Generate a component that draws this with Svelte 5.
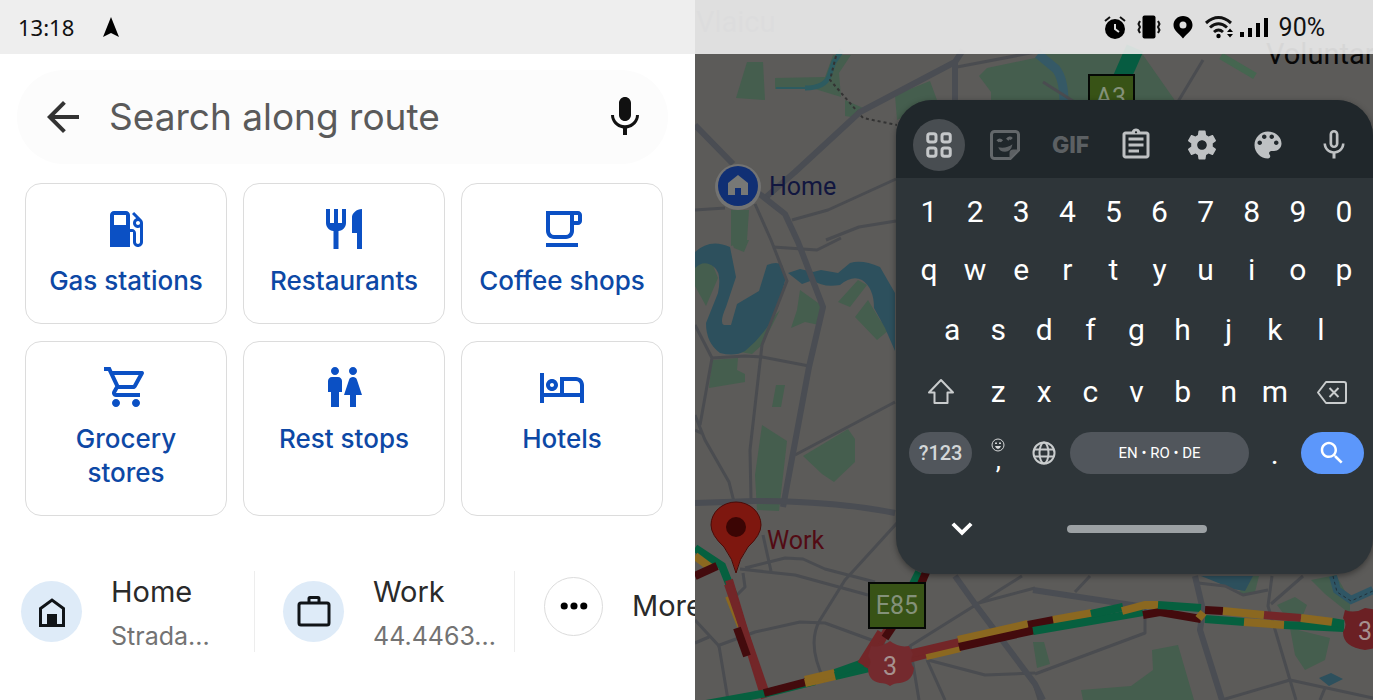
<script lang="ts">
	interface Category {
		name: string;
		icon: string;
	}

	interface Stroke {
		d: string;
		color: string;
	}

	const categories: Category[] = [
		{
			name: 'Gas stations',
			icon: 'M19.77 7.23l.01-.01-3.72-3.72L15 4.56l2.11 2.11c-.94.36-1.61 1.26-1.61 2.33 0 1.38 1.12 2.5 2.5 2.5.36 0 .69-.08 1-.21v7.21c0 .55-.45 1-1 1s-1-.45-1-1V14c0-1.1-.9-2-2-2h-1V5c0-1.1-.9-2-2-2H6c-1.1 0-2 .9-2 2v16h10v-7.5h1.5v5c0 1.38 1.12 2.5 2.5 2.5s2.5-1.12 2.5-2.5V9c0-.69-.28-1.32-.73-1.77zM12 10H6V5h6v5zm6 0c-.55 0-1-.45-1-1s.45-1 1-1 1 .45 1 1-.45 1-1 1z'
		},
		{
			name: 'Restaurants',
			icon: 'M11 9H9V2H7v7H5V2H3v7c0 2.12 1.66 3.84 3.75 3.97V22h2.5v-9.03C11.34 12.84 13 11.12 13 9V2h-2v7zm5-3v8h2.5v8H21V2c-2.76 0-5 2.24-5 4z'
		},
		{
			name: 'Coffee shops',
			icon: 'M16 5v8c0 1.1-.9 2-2 2H8c-1.1 0-2-.9-2-2V5h10m4-2H4v10c0 2.21 1.79 4 4 4h6c2.21 0 4-1.79 4-4v-3h2c1.11 0 2-.89 2-2V5c0-1.11-.89-2-2-2zm-2 5V5h2v3h-2zm2 11H4v2h16v-2z'
		},
		{
			name: 'Grocery stores',
			icon: 'M15.55 13c.75 0 1.41-.41 1.75-1.03l3.58-6.49c.37-.66-.11-1.48-.87-1.48H5.21l-.94-2H1v2h2l3.6 7.59-1.35 2.44C4.52 15.37 5.48 17 7 17h12v-2H7l1.1-2h7.45zM6.16 6h12.15l-2.76 5H8.53L6.16 6zM7 18c-1.1 0-1.99.9-1.99 2S5.9 22 7 22s2-.9 2-2-.9-2-2-2zm10 0c-1.1 0-1.99.9-1.99 2s.89 2 1.99 2 2-.9 2-2-.9-2-2-2z'
		},
		{
			name: 'Rest stops',
			icon: 'M5.5 22v-7.5H4V9c0-1.1.9-2 2-2h3c1.1 0 2 .9 2 2v5.5H9.5V22h-4zM18 22v-6h3l-2.54-7.63C18.18 7.55 17.42 7 16.56 7h-.12c-.86 0-1.63.55-1.9 1.37L12 16h3v6h3zM7.5 6c1.11 0 2-.89 2-2s-.89-2-2-2-2 .89-2 2 .89 2 2 2zm9 0c1.11 0 2-.89 2-2s-.89-2-2-2-2 .89-2 2 .89 2 2 2z'
		},
		{
			name: 'Hotels',
			icon: 'M7 14c1.66 0 3-1.34 3-3S8.66 8 7 8s-3 1.34-3 3 1.34 3 3 3zm0-4c.55 0 1 .45 1 1s-.45 1-1 1-1-.45-1-1 .45-1 1-1zm12-3h-8v8H3V5H1v15h2v-3h18v3h2v-9c0-2.21-1.79-4-4-4zm2 8h-8V9h6c1.1 0 2 .9 2 2v4z'
		}
	];

	const backIcon = 'M20 11H7.83l5.59-5.59L12 4l-8 8 8 8 1.41-1.41L7.83 13H20v-2z';
	const micIcon =
		'M12 14c1.66 0 3-1.34 3-3V5c0-1.66-1.34-3-3-3S9 3.34 9 5v6c0 1.66 1.34 3 3 3zM17.5 11c0 3-2.54 5.1-5.5 5.1S6.5 14 6.5 11H5c0 3.41 2.72 6.23 6 6.72V21h2v-3.28c3.28-.48 6-3.3 6-6.72h-1.5z';
	const micOutlineIcon =
		'M12 14c1.66 0 3-1.34 3-3V5c0-1.66-1.34-3-3-3S9 3.34 9 5v6c0 1.66 1.34 3 3 3zm-1.2-9.1c0-.66.54-1.2 1.2-1.2s1.2.54 1.2 1.2l-.01 6.2c0 .66-.53 1.2-1.19 1.2s-1.2-.54-1.2-1.2V4.9zM17.3 11c0 3-2.54 5.1-5.3 5.1S6.7 14 6.7 11H5c0 3.41 2.72 6.23 6 6.72V21h2v-3.28c3.28-.48 6-3.3 6-6.72h-1.7z';
	const clipboardIcon =
		'M7 15h7v2H7zm0-4h10v2H7zm0-4h10v2H7zm12-4h-4.18C14.4 1.84 13.3 1 12 1s-2.4.84-2.82 2H5c-1.1 0-2 .9-2 2v14c0 1.1.9 2 2 2h14c1.1 0 2-.9 2-2V5c0-1.1-.9-2-2-2zm-7-.25c.41 0 .75.34.75.75s-.34.75-.75.75-.75-.34-.75-.75.34-.75.75-.75zM19 19H5V5h14v14z';
	const gearIcon =
		'M19.14 12.94c.04-.3.06-.61.06-.94 0-.32-.02-.64-.07-.94l2.03-1.58c.18-.14.23-.41.12-.61l-1.92-3.32c-.12-.22-.37-.29-.59-.22l-2.39.96c-.5-.38-1.03-.7-1.62-.94l-.36-2.54c-.04-.24-.24-.41-.48-.41h-3.84c-.24 0-.43.17-.47.41l-.36 2.54c-.59.24-1.13.57-1.62.94l-2.39-.96c-.22-.08-.47 0-.59.22L2.74 8.87c-.12.21-.08.47.12.61l2.03 1.58c-.05.3-.09.63-.09.94s.02.64.07.94l-2.03 1.58c-.18.14-.23.41-.12.61l1.92 3.32c.12.22.37.29.59.22l2.39-.96c.5.38 1.03.7 1.62.94l.36 2.54c.05.24.24.41.48.41h3.84c.24 0 .44-.17.47-.41l.36-2.54c.59-.24 1.13-.56 1.62-.94l2.39.96c.22.08.47 0 .59-.22l1.92-3.32c.12-.22.07-.47-.12-.61l-2.01-1.58zM12 15.2c-1.76 0-3.2-1.44-3.2-3.2s1.44-3.2 3.2-3.2 3.2 1.44 3.2 3.2-1.44 3.2-3.2 3.2z';
	const paletteIcon =
		'M12 3c-4.97 0-9 4.03-9 9s4.03 9 9 9c.83 0 1.5-.67 1.5-1.5 0-.39-.15-.74-.39-1.01-.23-.26-.38-.61-.38-.99 0-.83.67-1.5 1.5-1.5H16c2.76 0 5-2.24 5-5 0-4.42-4.03-8-9-8zm-5.5 9c-.83 0-1.5-.67-1.5-1.5S5.67 9 6.5 9 8 9.67 8 10.5 7.33 12 6.5 12zm3-4C8.67 8 8 7.33 8 6.5S8.67 5 9.5 5s1.5.67 1.5 1.5S10.33 8 9.5 8zm5 0c-.83 0-1.5-.67-1.5-1.5S13.67 5 14.5 5s1.5.67 1.5 1.5S15.33 8 14.5 8zm3 4c-.83 0-1.5-.67-1.5-1.5S16.67 9 17.5 9s1.5.67 1.5 1.5-.67 1.5-1.5 1.5z';
	const searchIcon =
		'M15.5 14h-.79l-.28-.27C15.41 12.59 16 11.11 16 9.5 16 5.91 13.09 3 9.5 3S3 5.91 3 9.5 5.91 16 9.5 16c1.61 0 3.09-.59 4.23-1.57l.27.28v.79l5 4.99L20.49 19l-4.99-5zm-6 0C7.01 14 5 11.99 5 9.5S7.01 5 9.5 5 14 7.01 14 9.5 11.99 14 9.5 14z';
	const chevronIcon = 'M17.2 7.6L12 12.6 6.8 7.6 5 9.4l7 7 7-7z';

	const digits = [...'1234567890'];
	const topRow = [...'qwertyuiop'];
	const homeRow = [...'asdfghjkl'];
	const bottomRow = [...'zxcvbnm'];

	const green = '#06603f';
	const yellow = '#8b6820';
	const red = '#732628';
	const dark = '#430b0d';

	// map canvas, 678 x 700 units
	const parks = [
		'M52 62h16l2 38-29-2z',
		'M80 78l50-1 8-22h18l-12 18 2 24-26-8H80z',
		'M150 100l18 8-6 10-12-2zM200 95l35-14 7 19-40 20z',
		'M284 76l8-8 48-10 10-6h96l35 50H296v-10z',
		'M36 210h18l-2 30-16 6zM36 240h18l-5 12-10-4z',
		'M0 262l15-4 8 20-12 28-11-20z',
		'M45 352l40-42-18 35-10 9z',
		'M105 290l21 15-2 20-14-3-14 6 6-18z',
		'M143 302l20-22 9 5-17 22zM160 317l13-17 12 20 9 10-12 10z',
		'M17 360l26-2-1 12 8 4v8l-36 6z',
		'M81 385h9l-4 22h-9z',
		'M67 425l25 16-8 70-22-1-2-35z',
		'M108 456l45-27 7 10v23l-21 20-12-8z',
		'M386 690l50-4 22-16-1-20 26-5 16 55H388z',
		'M338 642h11l6 22-13 4z',
		'M582 605l18-8 12 8-4 10-20-2zM595 628l40 10-5 22-20 10-10-15z',
		'M616 580l25-5 14 25v14l-25-20z',
		'M544 592l14-16h6l-4 16-12 4z'
	];

	const waters = [
		'M0 252q15-14 35-5l6 30-10 30q-7 16-2 18l7 0 6-21 22-13 8-26q10-4 15 0l4 12-8 30q-10 25-33 44-10 6-25 2-14-10-14-30l12-30q4-20-4-26-10-8-19 1z',
		'M93 273l12-4 13 3 8-2 17 3 12-10q12-4 30 4l15 26v58l-10-23-11-20q0-20-12-28-10-5-22 5-17 3-27-5l-11 4z',
		'M506 576h52l-8 15-12-2-22-9z',
		'M624 678l12-5 12 6-14 7z'
	];

	const mainRoads = [
		'M0 125l38 39',
		'M268 50l-8 12-95 50-65 60-30 26',
		'M260 62v40',
		'M62 192l28 22 13 28 25 65-14 60-26 140',
		'M0 503l60-2q80 0 140 12',
		'M260 576l20 28 60 80 8 16',
		'M500 576l8 34-3 20 22 70',
		'M338 590l112 17'
	];

	const sideRoads = [
		'M0 210l30-2M60 204l16 36 16 41-25 64-12 105 1 50',
		'M262 67l84-16M97 220l36-10 68-31M131 240l33-13 37-6M78 247l44 3 24-12',
		'M0 325l17 33 33-2 17 1 47 9M17 358L5 425M0 415l10 25 24 42 5 20M0 430l8 4M100 455l100-53',
		'M202 523l-52 57-25 40q-14 24 5 62M50 568l40-10 18 1 22 10 50 13M45 569l55 6 73 20M68 535l8 36M48 573l2 14-11 11',
		'M22 646l38-14 45-10 25 1 60 22M0 620l24 26 9 54M0 643l14-6',
		'M327 576l-112 70 9 54M340 588l-60 16M233 660l57 15 50-2M232 660l18 40',
		'M395 576l-15 16M450 607v26l-110 41M503 583l27 3 18 9 25-5M577 576l-4 30 22 74M608 576l-32 28',
		'M527 700l68-20 83 18M595 680l6 20M630 688l-5 12M338 680l6 20M408 120l-60-38M508 60l-30 50'
	];

	const traffic: Stroke[] = [
		{ d: 'M0 548l27 18 12 30', color: green },
		{ d: 'M0 556l16 12', color: yellow },
		{ d: 'M0 576l22-10', color: dark },
		{ d: 'M34 596l12 30', color: yellow },
		{ d: 'M34 580l18 60 18 58', color: red },
		{ d: 'M33 584l38 110', color: red },
		{ d: 'M42 628l10 28', color: dark },
		{ d: 'M0 706l72-13 48-12', color: green },
		{ d: 'M69 693l42-11', color: dark },
		{ d: 'M110 683l34-8', color: yellow },
		{ d: 'M110 680l30-7', color: yellow },
		{ d: 'M140 676l34-8', color: green },
		{ d: 'M140 673l28-10', color: green },
		{ d: 'M172 668l20-38', color: red },
		{ d: 'M166 664l20-32', color: red },
		{ d: 'M190 638l8-12', color: dark },
		{ d: 'M218 584l6-12', color: green },
		{ d: 'M226 584l6-14', color: dark },
		{ d: 'M214 659l52-14', color: red },
		{ d: 'M231 656l34-8', color: yellow },
		{ d: 'M214 654l51-12', color: red },
		{ d: 'M263 640l70-16', color: yellow },
		{ d: 'M264 647l76-17', color: dark },
		{ d: 'M333 625l26-5', color: dark },
		{ d: 'M358 620l39-7', color: yellow },
		{ d: 'M338 631l110-19', color: green },
		{ d: 'M396 614l32-7', color: green },
		{ d: 'M427 611l23-6h15', color: yellow },
		{ d: 'M448 615l17-3 41 7', color: dark },
		{ d: 'M463 605l43 3', color: green },
		{ d: 'M510 619l40 3', color: green },
		{ d: 'M510 610l18 1', color: dark },
		{ d: 'M528 611l41 4', color: yellow },
		{ d: 'M549 622l41 3', color: yellow },
		{ d: 'M569 615l37 3', color: red },
		{ d: 'M589 625l60 3', color: green },
		{ d: 'M606 618l32 4', color: yellow },
		{ d: 'M637 622l12 2', color: green },
		{ d: 'M503 613l6 5', color: yellow }
	];

	let query = $state('');
</script>

{#snippet glyph(d: string, size: string)}
	<svg class="icon {size}" viewBox="0 0 24 24" aria-hidden="true"><path fill-rule="evenodd" {d} /></svg>
{/snippet}

<div class="screen">
	<main class="panel">
		<header class="status">
			<span class="clock">13:18</span>
			<svg class="nav-arrow" viewBox="0 0 18 22" aria-hidden="true"><path d="M9 1l8 20-8-4-8 4z" /></svg>
		</header>

		<form class="search">
			<button type="button" class="plain back" aria-label="Back">{@render glyph(backIcon, 'large')}</button>
			<input type="text" aria-label="Search along route" placeholder="Search along route" bind:value={query} />
			<button type="button" class="plain" aria-label="Voice search">{@render glyph(micIcon, 'large')}</button>
		</form>

		<div class="categories">
			{#each categories as category (category.name)}
				<button type="button" class="category">
					{@render glyph(category.icon, 'large')}
					<span>{category.name}</span>
				</button>
			{/each}
		</div>

		<div class="places">
			<button type="button" class="plain place">
				<span class="bubble">
					<svg class="bubble-icon" viewBox="0 0 36 36" aria-hidden="true">
						<path d="M6.5 31.5v-17L18 6l11.5 8.5v17z" fill="none" stroke="#101418" stroke-width="3" />
						<path d="M13 20h10v12H13z" fill="#101418" />
					</svg>
				</span>
				<span class="place-text">
					<span class="place-name">Home</span>
					<span class="place-detail">Strada...</span>
				</span>
			</button>
			<button type="button" class="plain place work">
				<span class="bubble">
					<svg class="bubble-icon" viewBox="0 0 36 36" aria-hidden="true">
						<rect x="3" y="9" width="30" height="22" rx="2" fill="none" stroke="#101418" stroke-width="3" />
						<path d="M13 9V4.500a1 1 0 0 1 1-1h8a1 1 0 0 1 1 1V9" fill="none" stroke="#101418" stroke-width="3" />
					</svg>
				</span>
				<span class="place-text">
					<span class="place-name">Work</span>
					<span class="place-detail">44.4463...</span>
				</span>
			</button>
			<button type="button" class="plain place more">
				<span class="bubble outline">
					<svg class="bubble-icon" viewBox="0 0 36 36" aria-hidden="true">
						<circle cx="7" cy="18" r="4" /><circle cx="18" cy="18" r="4" /><circle cx="29" cy="18" r="4" />
					</svg>
				</span>
				<span class="place-name">More</span>
			</button>
		</div>
	</main>

	<section class="map-panel" aria-label="Map">
		<svg class="map" viewBox="0 0 678 700" preserveAspectRatio="xMinYMin slice">
			<rect width="678" height="700" fill="#5c5b59" />
			<g fill="#455e4e">
				{#each parks as d}<path {d} />{/each}
			</g>
			<g fill="#2d505d">
				{#each waters as d}<path {d} />{/each}
			</g>
			<g fill="none" stroke="#2d5b60" stroke-width="5">
				<path d="M81 88l32 0" stroke-width="2" />
				<path d="M110 88q20 0 24-12l5-14 8-12" />
				<path d="M343 54l18 15q8 10 8 34" stroke="#355966" stroke-width="9" />
				<path d="M526 56l34 20" stroke="#456650" stroke-width="7" />
				<path d="M638 576l4 14 14 10 22-10" stroke="#2f5665" stroke-width="8" />
			</g>
			<path d="M141 56l-6 24 33 38 34 7" fill="none" stroke="#333" stroke-width="2" stroke-dasharray="3 3" />
			<path d="M638 576l4 16 14 9 22-10" fill="none" stroke="#222f38" stroke-width="1" stroke-dasharray="3 3" />
			<g fill="none" stroke="#4a4c50" stroke-width="3" stroke-linejoin="round">
				{#each sideRoads as d}<path {d} />{/each}
			</g>
			<g fill="none" stroke="#4a4d53" stroke-width="6" stroke-linejoin="round">
				{#each mainRoads as d}<path {d} />{/each}
			</g>
			<path d="M440 48l-22 50" stroke="#065c41" stroke-width="18" />
			<g fill="none" stroke-width="8">
				{#each traffic as line}<path d={line.d} stroke={line.color} />{/each}
			</g>

			<g fill="#385316" stroke="#050805" stroke-width="2">
				<rect x="394" y="75" width="45" height="44" />
				<rect x="174" y="583" width="56" height="45" />
			</g>
			<g class="route" fill="#84917a">
				<text x="416" y="106">A3</text>
				<text x="202" y="614">E85</text>
			</g>

			<path d="M176 646q10 2 19-5 9 7 19 5l4 8q-4 8 1 14-1 13-14 15-6 0-10 3-4-3-10-3-12-2-12-15 5-6 0-12z" fill="#742a2e" />
			<path d="M650 610q10 4 20-2l20 3v34q-8 3-20 5-22-3-22-18 5-8 0-14z" fill="#6b2024" />
			<g class="route" fill="#a6918f">
				<text x="195" y="675">3</text>
				<text x="670" y="640">3</text>
			</g>

			<circle cx="43" cy="187" r="23" fill="#737372" />
			<circle cx="43" cy="186" r="20" fill="#102f74" />
			<path d="M33 195v-12l10-8 10 8v12h-7v-7h-6v7z" fill="#777876" />
			<path d="M41 573q-3-14-12-26-13-12-13-22a25 23 0 0 1 50 0q0 10-13 22-9 12-12 26z" fill="#7e170f" stroke="#4c0906" />
			<circle cx="41" cy="527" r="10" fill="#3b0504" />
			<g class="map-label">
				<text x="74" y="195" fill="#11163f">Home</text>
				<text x="72" y="549" fill="#520b14">Work</text>
			</g>
			<g class="town" fill="#080808">
				<text x="1" y="32" fill="#404345">Vlaicu</text>
				<text x="571" y="64">Voluntari</text>
			</g>
		</svg>

		<header class="status over-map">
			<svg class="status-icon" viewBox="0 0 24 24" aria-hidden="true">
				<circle cx="12" cy="14" r="10" />
				<path d="M2 6l5-4M22 6l-5-4" stroke="#111" stroke-width="2" />
				<path d="M12 9v5l4 3" fill="none" stroke="#ddd" stroke-width="2" />
			</svg>
			<svg class="status-icon" viewBox="0 0 24 24" aria-hidden="true">
				<rect x="5.5" y="0.5" width="13" height="23" rx="2" />
				<path d="M3 6l-1.5 3L3 12l-1.5 3L3 18M21 6l1.5 3L21 12l1.5 3L21 18" fill="none" stroke="#111" stroke-width="2" />
			</svg>
			<svg class="status-icon" viewBox="0 0 24 24" aria-hidden="true">
				<path fill-rule="evenodd" d="M12 1C6.500 1 2.500 5 2.500 10c0 5.500 5 8 9.500 13.500C16.500 18 21.500 15.500 21.500 10 21.500 5 17.500 1 12 1zm0 5.500a3.500 3.500 0 1 1 0 7 3.500 3.500 0 0 1 0-7z" />
			</svg>
			<svg class="status-icon wide" viewBox="0 0 30 24" aria-hidden="true">
				<path d="M1 8q12.500-11 25 0M5 12.500q8.500-7.500 17 0M9 17q4.500-4 9 0" fill="none" stroke="#111" stroke-width="3" />
				<circle cx="13.500" cy="21" r="2.200" />
				<path d="M22 17l3-3.500 3 3.500zM22 19l3 3.500 3-3.500z" />
			</svg>
			<svg class="status-icon wide signal" viewBox="0 0 30 24" aria-hidden="true">
				<path d="M1 17h4v5H1zM9 13h4v9H9zM17 8h4v14h-4zM25 3h4v19h-4z" />
			</svg>
			<span class="battery">90%</span>
		</header>

		<div class="keyboard">
			<div class="toolbar">
				<button type="button" class="tool active" aria-label="Shortcuts">
					<svg class="icon medium" viewBox="0 0 24 24" aria-hidden="true">
						<g fill="none" stroke="#c4c7c9" stroke-width="2">
							<rect x="4.500" y="4.500" width="5.500" height="5.500" rx="1.500" /><rect x="14" y="4.500" width="5.500" height="5.500" rx="1.500" />
							<rect x="4.500" y="14" width="5.500" height="5.500" rx="1.500" /><rect x="14" y="14" width="5.500" height="5.500" rx="1.500" />
						</g>
					</svg>
				</button>
				<button type="button" class="tool dim" aria-label="Stickers">
					<svg class="icon medium" viewBox="0 0 24 24" aria-hidden="true">
						<path d="M15.500 21H5a2 2 0 0 1-2-2V5a2 2 0 0 1 2-2h14a2 2 0 0 1 2 2v10.500z" fill="none" stroke="#63676a" stroke-width="2" />
						<path d="M15 21v-3.500a2.500 2.500 0 0 1 2.500-2.500H21zM7.500 13.500q5.500 1 9.500-2-1 5-5 5-3.500 0-4.500-3z" />
						<path d="M7 9.500q1.500-1.500 3 0M13.500 8.500q1.500-2 3-.5" fill="none" stroke="#63676a" stroke-width="2" />
					</svg>
				</button>
				<button type="button" class="tool dim gif">GIF</button>
				<button type="button" class="tool" aria-label="Clipboard">{@render glyph(clipboardIcon, 'medium')}</button>
				<button type="button" class="tool" aria-label="Settings">{@render glyph(gearIcon, 'medium')}</button>
				<button type="button" class="tool" aria-label="Themes">{@render glyph(paletteIcon, 'medium')}</button>
				<button type="button" class="tool" aria-label="Voice typing">{@render glyph(micOutlineIcon, 'medium')}</button>
			</div>

			<div class="keys">
				{#each digits as key (key)}<button type="button" class="key">{key}</button>{/each}
				{#each topRow as key (key)}<button type="button" class="key">{key}</button>{/each}
				{#each homeRow as key (key)}<button type="button" class="key" class:indent={key === 'a'}>{key}</button>{/each}

				<button type="button" class="key side shift" aria-label="Shift">
					<svg class="icon medium" viewBox="0 0 36 36" aria-hidden="true">
						<path d="M18 7L6 19.500h5.500V30h13V19.500H30z" fill="none" stroke="#c9cccd" stroke-width="2" stroke-linejoin="round" />
					</svg>
				</button>
				{#each bottomRow as key (key)}<button type="button" class="key">{key}</button>{/each}
				<button type="button" class="key side" aria-label="Delete">
					<svg class="icon medium" viewBox="0 0 36 36" aria-hidden="true">
						<path d="M12 9h18a2 2 0 0 1 2 2v17a2 2 0 0 1-2 2H12l-8-10.500zM15.500 15l9 9M24.500 15l-9 9" fill="none" stroke="#c9cccd" stroke-width="2" stroke-linejoin="round" />
					</svg>
				</button>

				<button type="button" class="key side pill symbols">?123</button>
				<button type="button" class="key comma">
					<svg class="smiley" viewBox="0 0 14 14" aria-hidden="true">
						<circle cx="7" cy="7" r="6" fill="none" stroke="#d5d7d8" />
						<path d="M4 8h6q-1 3-3 3t-3-3zM4 4.500h2v1.500H4zM8 4.500h2v1.500H8z" fill="#d5d7d8" />
					</svg>
					<span>,</span>
				</button>
				<button type="button" class="key" aria-label="Change language">
					<svg class="globe" viewBox="0 0 24 24" aria-hidden="true">
						<g fill="none" stroke="#c9cccd" stroke-width="2">
							<circle cx="12" cy="12" r="10.500" /><ellipse cx="12" cy="12" rx="4.500" ry="10.500" /><path d="M2.500 8.500h19M2.500 15.500h19" />
						</g>
					</svg>
				</button>
				<button type="button" class="key pill space">EN • RO • DE</button>
				<button type="button" class="key">.</button>
				<button type="button" class="key side pill go" aria-label="Search">{@render glyph(searchIcon, 'small')}</button>
			</div>

			<div class="grip-row">
				<button type="button" class="plain collapse" aria-label="Hide keyboard">{@render glyph(chevronIcon, 'medium')}</button>
				<span class="grip"></span>
			</div>
		</div>
	</section>
</div>

<style>
	:global(body) {
		margin: 0;
		background: #fff;
	}

	.screen {
		display: grid;
		grid-template-columns: 695fr 678fr;
		min-height: 100vh;
		font-family: Inter, Roboto, sans-serif;
	}

	button {
		font: inherit;
		color: inherit;
		margin: 0;
		cursor: pointer;
	}

	.plain {
		background: none;
		border: 0;
		padding: 0;
	}

	.icon {
		display: block;
		flex: none;
		fill: currentColor;
	}

	.large {
		width: 48px;
		height: 48px;
	}

	.medium {
		width: 36px;
		height: 36px;
	}

	.small {
		width: 30px;
		height: 30px;
	}

	.panel {
		min-width: 0;
		overflow: hidden;
		background: #fff;
	}

	.status {
		display: flex;
		align-items: center;
		box-sizing: border-box;
		height: 54px;
		padding: 0 18px;
		background: #eee;
		color: #111;
	}

	.clock {
		font-family: "Noto Sans", sans-serif;
		font-size: 22px;
	}

	.nav-arrow {
		width: 18px;
		height: 22px;
		margin-left: 28px;
	}

	.search {
		display: flex;
		align-items: center;
		height: 94px;
		margin: 16px 27px 0 17px;
		padding: 0 19px 0 22px;
		box-sizing: border-box;
		border-radius: 47px;
		background: #fcfcfc;
		color: #111;
	}

	.back {
		color: #333;
	}

	.search input {
		flex: 1;
		min-width: 0;
		margin-left: 22px;
		padding: 0;
		border: 0;
		outline: none;
		background: none;
		font: 37px/48px Inter, Roboto, sans-serif;
		color: #222;
	}

	.search input::placeholder {
		color: #5a5a5a;
		opacity: 1;
	}

	.categories {
		display: grid;
		grid-template-columns: repeat(3, 1fr);
		gap: 17px 16px;
		margin: 19px 32px 0 25px;
	}

	.category {
		display: flex;
		flex-direction: column;
		align-items: center;
		gap: 11px;
		padding: 21px 12px 25px;
		border: 1px solid #dcdcdc;
		border-radius: 16px;
		background: #fff;
		color: #0b50c4;
		font-size: 26px;
		font-weight: 500;
		line-height: 34px;
	}

	.category span {
		color: #0d48a5;
	}

	.places {
		display: flex;
		align-items: flex-start;
		margin: 55px 0 0 21px;
	}

	.place {
		display: flex;
		flex: none;
		align-items: center;
		gap: 29px;
		box-sizing: border-box;
		width: 234px;
		height: 81px;
		border-right: 1px solid #ededed;
		text-align: left;
	}

	.place.work {
		width: 260px;
		padding-left: 28px;
	}

	.place.more {
		width: 210px;
		height: 70px;
		padding-left: 29px;
		border-right: 0;
	}

	.bubble {
		display: flex;
		flex: none;
		align-items: center;
		justify-content: center;
		box-sizing: border-box;
		width: 61px;
		height: 61px;
		border-radius: 50%;
		background: #deebf8;
	}

	.bubble.outline {
		width: 59px;
		height: 59px;
		border: 1px solid #dcdcdc;
		background: #fff;
	}

	.bubble-icon {
		width: 36px;
		height: 36px;
	}

	.outline .bubble-icon {
		width: 32px;
		height: 32px;
	}

	.place-text {
		display: flex;
		flex-direction: column;
		gap: 6px;
		padding-top: 4px;
	}

	.place-name {
		font-size: 29px;
		line-height: 38px;
		color: #2a2a2a;
	}

	.place-detail {
		font-size: 25px;
		line-height: 38px;
		color: #737373;
	}

	.map-panel {
		position: relative;
		min-width: 0;
		overflow: hidden;
		background: #5c5b59;
	}

	.map {
		position: absolute;
		inset: 0;
		width: 100%;
		height: 100%;
		font-family: Roboto, sans-serif;
	}

	.route {
		font-size: 25px;
		text-anchor: middle;
	}

	.map-label {
		font-size: 25px;
	}

	.town {
		font-size: 29px;
	}

	.over-map {
		position: relative;
		justify-content: flex-end;
		gap: 10px;
		padding-right: 48px;
		background: rgba(237, 237, 237, 0.9);
	}

	.status-icon {
		width: 24px;
		height: 24px;
	}

	.status-icon.wide {
		width: 30px;
		height: 24px;
	}

	.status-icon.signal {
		margin-left: -6px;
	}

	.battery {
		font-family: Roboto, sans-serif;
		font-size: 25px;
	}

	.keyboard {
		position: absolute;
		top: 100px;
		left: 201px;
		right: 0;
		overflow: hidden;
		border-radius: 36px;
		background: #2e3539;
		box-shadow: 0 2px 6px rgba(0, 0, 0, 0.4);
		color: #fff;
		font-family: Roboto, sans-serif;
	}

	.toolbar {
		display: grid;
		grid-template-columns: repeat(7, 1fr);
		align-items: center;
		justify-items: center;
		box-sizing: border-box;
		height: 78px;
		padding: 12px 6px 0 10px;
		background: #20272b;
	}

	.tool {
		display: flex;
		align-items: center;
		justify-content: center;
		width: 52px;
		height: 52px;
		padding: 0;
		border: 0;
		border-radius: 50%;
		background: none;
		color: #bec1c3;
	}

	.tool.active {
		background: #484d51;
	}

	.tool.dim {
		color: #5c6063;
	}

	.gif {
		font-family: Inter, sans-serif;
		font-size: 23px;
		font-weight: 800;
	}

	.keys {
		display: grid;
		grid-template-columns: repeat(20, 1fr);
		grid-template-rows: 56px 60px 61px 62px 62px;
		padding: 5px 6px 0 10px;
	}

	.key {
		display: flex;
		grid-column: span 2;
		align-items: center;
		justify-content: center;
		min-width: 0;
		padding: 0;
		border: 0;
		background: none;
		font-size: 30px;
	}

	.key.indent {
		grid-column: 2 / span 2;
	}

	.key.side {
		grid-column: span 3;
	}

	.key.shift {
		grid-column: 1 / span 3;
	}

	.key.pill {
		align-self: center;
		height: 42px;
		margin: 0 3px;
		border-radius: 21px;
		background: #51565c;
	}

	.key.symbols {
		font-size: 20px;
		font-weight: 500;
		color: #d3d6d8;
	}

	.key.space {
		grid-column: span 8;
		font-size: 15px;
	}

	.key.go {
		background: #5c97fb;
	}

	.key.comma {
		flex-direction: column;
		font-size: 26px;
		line-height: 16px;
	}

	.smiley {
		width: 14px;
		height: 14px;
	}

	.globe {
		width: 24px;
		height: 24px;
	}

	.grip-row {
		display: grid;
		grid-template-columns: 1fr auto 1fr;
		align-items: center;
		height: 90px;
		padding: 0 6px 0 10px;
	}

	.collapse {
		justify-self: start;
		margin-left: 38px;
	}

	.grip {
		width: 140px;
		height: 8px;
		border-radius: 4px;
		background: #9ca1a4;
	}
</style>
